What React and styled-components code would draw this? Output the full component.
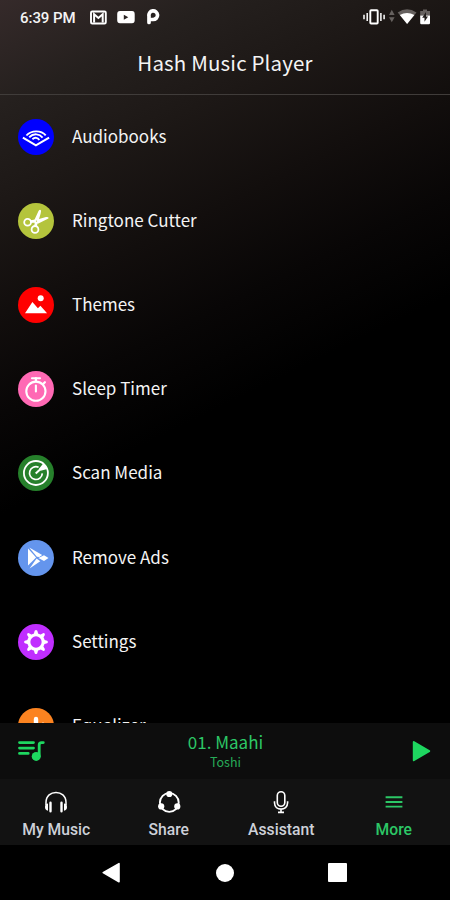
import React, { useState } from "react";
import styled, { createGlobalStyle, ThemeProvider } from "styled-components";

const theme = {
	colors: {
		primary: "#1ed760",
		primaryText: "#2cc766",
		player: "#0d0d0d",
		tabBar: "#121212",
		text: "#f4f4f4",
		tabText: "#cdd0d8"
	},
	fonts: {
		body: `"Noto Sans CJK JP", "Noto Sans", sans-serif`,
		system: `Roboto, "Liberation Sans", sans-serif`
	}
};

const AudiobooksIcon = () => (
	<svg viewBox="0 0 36 36" fill="none" stroke="#fff">
		<path d="M4.9 18.6L17.9 26.3L31.1 18.6" strokeWidth="2.1" />
		<path d="M8.4 16.5C13.2 10.9 23.3 11 27.7 16.4" strokeWidth="1.9" />
		<path d="M11.2 18.2C15.8 13.8 21.5 14.8 24.6 18.6" strokeWidth="1.9" />
		<path d="M14.4 20.2C17 17.9 19.8 18.6 21.3 20.9" strokeWidth="1.9" />
	</svg>
);

const CutterIcon = () => (
	<svg viewBox="0 0 36 36" fill="none" stroke="#fff">
		<circle cx="9.6" cy="19.2" r="3.4" strokeWidth="1.8" />
		<circle cx="17" cy="26.4" r="3.4" strokeWidth="1.8" />
		<path d="M12.6 18.6L17.5 18M17.6 23L18.3 18.6" strokeWidth="2.8" />
		<path d="M15.8 18.2L20.5 8Q22 5.6 23 7.5Q23.3 9 21 16L28 14.1Q31.5 13.6 30.4 15.6L20.4 20.4L17.8 20.7Z" fill="#fff" stroke="none" />
		<circle cx="18.5" cy="18.1" r=".7" fill="#b4c43c" stroke="none" />
	</svg>
);

const ThemesIcon = () => (
	<svg viewBox="0 0 36 36" fill="#fff">
		<path d="M7 26.3L14.4 15L19.9 21.3L22.4 18.8L29.1 26.3Z" />
		<circle cx="22.7" cy="11.3" r="3" />
	</svg>
);

const TimerIcon = () => (
	<svg viewBox="0 0 36 36" fill="none" stroke="#fff" strokeLinecap="round">
		<circle cx="17.9" cy="20.2" r="9.6" strokeWidth="2.1" />
		<path d="M14 7.3H22" strokeWidth="2.1" />
		<path d="M17.9 7.2V10.5M25 13.1L26.9 11.2" strokeWidth="2.2" />
		<path d="M17.9 14.5V20.4" strokeWidth="2.1" />
	</svg>
);

const ScanIcon = () => (
	<svg viewBox="0 0 36 36" fill="none" stroke="#fff">
		<circle cx="17.9" cy="18" r="12" strokeWidth="1.8" />
		<path d="M20.6 12.3A6.4 6.4 0 1 0 24.3 18.4" strokeWidth="1.7" />
		<path d="M21 13.8L25.4 8.2L29.4 14L22.6 15.8Z" fill="#fff" stroke="none" />
		<path d="M17.7 18.4L22.6 13.9" strokeWidth="2" />
	</svg>
);

const AdsIcon = () => (
	<svg viewBox="0 0 36 36" fill="#fff">
		<path d="M10 8.4V25.6L18.1 17.6Z" />
		<path d="M11.2 7.6L24.2 15L21.3 17L18.9 16.7Z" />
		<path d="M11.6 28.4L18.6 18.4L22.3 21.2Z" />
		<path d="M20.4 18.1L26 15.2L30.5 18L26 21Z" />
	</svg>
);

const SettingsIcon = () => (
	<svg viewBox="0 0 36 36" fill="none" stroke="#fff">
		<circle cx="18" cy="18" r="7.2" strokeWidth="3.1" />
		{[0, 45, 90, 135, 180, 225, 270, 315].map(angle => (
			<path key={angle} d="M15.4 11.3L16.7 6.8Q18 5 19.3 6.8L20.6 11.3Z" transform={`rotate(${angle} 18 18)`} fill="#fff" stroke="none" />
		))}
	</svg>
);

const EqualizerIcon = () => (
	<svg viewBox="0 0 36 36" fill="none" stroke="#fff" strokeLinecap="round">
		<path d="M18 11V26" strokeWidth="4.4" />
		<path d="M25 16V26M11 19V26" strokeWidth="3" />
	</svg>
);

const MENU = [
	{ name: "Audiobooks", color: "#0000ff", Icon: AudiobooksIcon },
	{ name: "Ringtone Cutter", color: "#b4c43c", Icon: CutterIcon },
	{ name: "Themes", color: "#ff0000", Icon: ThemesIcon },
	{ name: "Sleep Timer", color: "#ff69b4", Icon: TimerIcon },
	{ name: "Scan Media", color: "#26802b", Icon: ScanIcon },
	{ name: "Remove Ads", color: "#6495ed", Icon: AdsIcon },
	{ name: "Settings", color: "#c02eff", Icon: SettingsIcon },
	{ name: "Equalizer", color: "#fb8320", Icon: EqualizerIcon }
];

const HeadphonesIcon = () => (
	<svg width="24" height="24" viewBox="0 0 24 24" fill="none" stroke="currentColor">
		<path d="M2 15V12.5C2 -1 22 -1 22 12.5V15" strokeWidth="1.5" />
		<path d="M6.5 12.8V21.2M17.5 12.8V21.2" strokeWidth="2.4" strokeLinecap="round" />
		<path d="M4 13.4Q1 13.5 1 17Q1 20.4 4 20.7ZM20 13.4Q23 13.5 23 17Q23 20.4 20 20.7Z" fill="currentColor" stroke="none" />
	</svg>
);

const ShareIcon = () => (
	<svg width="24" height="24" viewBox="0 0 24 24" fill="currentColor">
		<circle cx="12.3" cy="12.5" r="9.4" fill="none" stroke="currentColor" strokeWidth="1.9" />
		<circle cx="12.3" cy="4" r="3.1" />
		<circle cx="4.2" cy="16.4" r="3.1" />
		<circle cx="20.3" cy="16.4" r="3.1" />
	</svg>
);

const AssistantIcon = () => (
	<svg width="24" height="24" viewBox="0 0 24 24" fill="none" stroke="currentColor" strokeWidth="1.6">
		<rect x="8.3" y="1.7" width="7.5" height="14.5" rx="3.75" />
		<path d="M5.5 11.3V12.8C5.5 21.2 18.6 21.2 18.6 12.8V11.3M12 19V22.5M9 22.4H15" />
	</svg>
);

const MoreIcon = () => (
	<svg width="24" height="24" viewBox="0 0 24 24" stroke="currentColor" strokeWidth="1.9">
		<path d="M3.6 7.3H20.4M3.6 12H20.4M3.6 16.6H20.4" />
	</svg>
);

const TABS = [
	{ name: "My Music", Icon: HeadphonesIcon },
	{ name: "Share", Icon: ShareIcon },
	{ name: "Assistant", Icon: AssistantIcon },
	{ name: "More", Icon: MoreIcon }
];

const App = () => {
	const [activeTab, setActiveTab] = useState("More");

	const renderStatusBar = () => (
		<StatusBar>
			<Clock>6:39 PM</Clock>
			<svg width="71" height="18" viewBox="0 0 71 18" fill="#fff">
				<rect x="1" y="2.5" width="14.8" height="12" rx="1.3" fill="none" stroke="#fff" strokeWidth="1.9" />
				<path d="M4.1 13.5V5.3L8.4 9L12.7 5.3V13.5" fill="none" stroke="#fff" strokeWidth="2" />
				<path fillRule="evenodd" d="M30 2H42Q44.7 2 44.7 5.2V11.2Q44.7 14.2 42 14.2H30Q27.2 14.2 27.2 11.2V5.2Q27.2 2 30 2ZM33.8 5.7V10.7L38.3 8.2Z" />
				<path d="M59 13.5V7.1A4.3 4.3 0 1 1 63.2 10.5H61.4" fill="none" stroke="#fff" strokeWidth="3.7" strokeLinecap="round" />
			</svg>
			<Spacer />
			<svg width="67" height="18" viewBox="0 0 67 18" fill="#fff">
				<rect x="7.3" y="1.3" width="7.4" height="13.2" rx=".8" fill="none" stroke="#fff" strokeWidth="1.9" />
				<path d="M4.2 4.1V11.9M17.9 4.1V11.9M1 5.8V10.3M21.1 5.8V10.3" stroke="#fff" strokeWidth="1.5" />
				<path d="M26 6L28.8 .8L31.6 6ZM26 8.3H31.6L28.8 13.3Z" fill="#66615f" />
				<path d="M34.7 3.5Q44 -3 53.5 3.5L44.1 15Z" fill="#66615f" />
				<path d="M36.8 6Q44 1.8 51.4 6L44.1 15Z" />
				<path d="M57.2 2H60V.5H64V2H67V6.5H57.2Z" fill="#66615f" />
				<path d="M57.2 6.5H67V14.1Q67 15.3 65.8 15.3H58.4Q57.2 15.3 57.2 14.1Z" />
				<path d="M63 3L59.2 8.7H61.5V12.7L65 7.5H63Z" fill="#211d1b" />
			</svg>
		</StatusBar>
	);

	return (
		<ThemeProvider theme={theme}>
			<GlobalStyle />
			<Screen>
				{renderStatusBar()}
				<Header>
					<Title>Hash Music Player</Title>
				</Header>
				<MenuList>
					{MENU.map(({ name, color, Icon }) => (
						<MenuItem key={name}>
							<IconCircle $color={color}>
								<Icon />
							</IconCircle>
							<MenuLabel>{name}</MenuLabel>
						</MenuItem>
					))}
				</MenuList>
				<MiniPlayer>
					<svg width="28" height="28" viewBox="0 0 28 28" fill="none" stroke={theme.colors.primary} strokeLinecap="round">
						<path d="M1.5 5.6H15.5M1.5 11.1H15.5M1.5 16.4H10.2" strokeWidth="2.8" />
						<circle cx="18.2" cy="19.4" r="4.5" fill={theme.colors.primary} stroke="none" />
						<path d="M21.2 19.6V7.9Q21.2 5.6 23.5 5.6H25.3" strokeWidth="2.8" />
					</svg>
					<Track>
						<TrackName>01. Maahi</TrackName>
						<Artist>Toshi</Artist>
					</Track>
					<svg width="28" height="28" viewBox="0 0 28 28" fill={theme.colors.primary} stroke={theme.colors.primary} strokeWidth="2" strokeLinejoin="round">
						<path d="M8.8 5L24.2 14.2L8.8 23.2Z" />
					</svg>
				</MiniPlayer>
				<TabBar>
					{TABS.map(({ name, Icon }) => (
						<Tab key={name} $active={activeTab === name} onClick={() => setActiveTab(name)}>
							<Icon />
							<span>{name}</span>
						</Tab>
					))}
				</TabBar>
				<SystemNav>
					<svg width="20" height="22" viewBox="0 0 20 22">
						<path d="M2.2 10.6L18 1.6V19.8Z" fill="#fff" stroke="#fff" strokeWidth="1.6" strokeLinejoin="round" />
					</svg>
					<HomeButton />
					<RecentsButton />
				</SystemNav>
			</Screen>
		</ThemeProvider>
	);
};

const GlobalStyle = createGlobalStyle`
	* {
		box-sizing: border-box;
	}
	body {
		margin: 0;
		background: #000;
	}
	svg {
		display: block;
		flex: none;
	}
`;

const Screen = styled.div`
	width: 450px;
	height: 900px;
	display: flex;
	flex-direction: column;
	overflow: hidden;
	color: ${({ theme }) => theme.colors.text};
	font-family: ${({ theme }) => theme.fonts.body};
	background: linear-gradient(154deg, #352a2a 0%, #25201e 9.5%, #1d1816 18%, #120e0d 28%, #080606 37%, #000 46%);
`;

const StatusBar = styled.div`
	height: 34px;
	flex: none;
	display: flex;
	align-items: center;
	padding: 1px 20px 0;
`;

const Clock = styled.div`
	width: 70px;
	font: 500 15px/18px ${({ theme }) => theme.fonts.system};
	letter-spacing: -0.05px;
	white-space: nowrap;
`;

const Spacer = styled.div`
	flex: 1;
`;

const Header = styled.div`
	height: 61px;
	flex: none;
	display: flex;
	justify-content: center;
	align-items: center;
	padding-bottom: 4px;
	border-bottom: 1px solid #403c3a;
`;

const Title = styled.h1`
	margin: 0;
	font-size: 20.5px;
	line-height: 30px;
	font-weight: 400;
	letter-spacing: 0.15px;
`;

const MenuList = styled.div`
	flex: 1;
	min-height: 0;
	overflow: hidden;
`;

const MenuItem = styled.div`
	height: 84.1px;
	display: flex;
	align-items: center;
	gap: 18px;
	padding: 0 18px;
`;

const IconCircle = styled.div`
	width: 36px;
	height: 36px;
	border-radius: 50%;
	background: ${({ $color }) => $color};
`;

const MenuLabel = styled.div`
	padding-bottom: 2px;
	font-size: 17px;
	line-height: 26px;
`;

const MiniPlayer = styled.div`
	height: 56px;
	flex: none;
	display: flex;
	align-items: center;
	justify-content: space-between;
	padding: 0 17px 0 18px;
	color: ${({ theme }) => theme.colors.primaryText};
	background: ${({ theme }) => theme.colors.player};
`;

const Track = styled.div`
	text-align: center;
`;

const TrackName = styled.div`
	font-size: 17px;
	line-height: 22px;
`;

const Artist = styled.div`
	font-size: 12.5px;
	line-height: 18px;
	opacity: 0.85;
`;

const TabBar = styled.div`
	height: 66px;
	flex: none;
	display: grid;
	grid-template-columns: repeat(4, 1fr);
	background: ${({ theme }) => theme.colors.tabBar};
`;

const Tab = styled.button`
	display: flex;
	flex-direction: column;
	align-items: center;
	gap: 6px;
	padding: 11px 0 0;
	border: 0;
	background: none;
	cursor: pointer;
	color: ${({ $active, theme }) => ($active ? theme.colors.primaryText : "#fff")};
	font: 500 15.7px/19px ${({ theme }) => theme.fonts.system};

	span {
		color: ${({ $active, theme }) => ($active ? theme.colors.primaryText : theme.colors.tabText)};
	}
`;

const SystemNav = styled.div`
	height: 55px;
	flex: none;
	display: flex;
	align-items: center;
	justify-content: space-between;
	padding: 0 103px 0 101px;
	background: #000;
`;

const HomeButton = styled.div`
	width: 18px;
	height: 18px;
	border-radius: 50%;
	background: #fff;
`;

const RecentsButton = styled.div`
	width: 19px;
	height: 19px;
	border-radius: 1px;
	background: #fff;
`;

export default App;
